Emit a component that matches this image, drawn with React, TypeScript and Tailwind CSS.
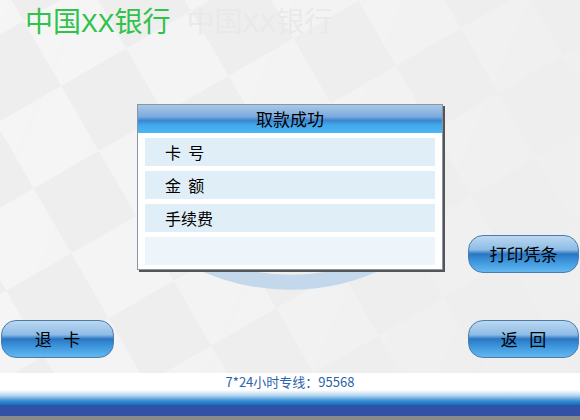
const cjk = "font-['Noto_Sans_CJK_SC',sans-serif]";

function AtmButton({ label }: { label: string }) {
  return (
    <div
      className={`h-[38px] rounded-[15px] border border-[#4a7cb0] bg-[linear-gradient(180deg,#bcd8f0_0%,#8dbce6_38%,#2a76c2_50%,#3f98de_72%,#64b8f0_100%)] flex items-center justify-center text-[17px] text-black whitespace-pre ${cjk}`}
    >
      {label}
    </div>
  );
}

export default function App() {
  const rows = ["卡  号", "金  额", "手续费", ""];

  return (
    <div className="relative w-[580px] h-[420px] overflow-hidden bg-[#eeeeee] flex flex-col">
      {/* background checker + ring */}
      <svg className="absolute inset-0" width="580" height="420">
        <defs>
          <pattern
            id="chk"
            width="150"
            height="150"
            patternUnits="userSpaceOnUse"
            patternTransform="rotate(-30) translate(10 30)"
          >
            <rect x="0" y="0" width="75" height="75" fill="#f6f6f6" />
            <rect x="75" y="75" width="75" height="75" fill="#f6f6f6" />
          </pattern>
          <linearGradient id="fade" x1="0" y1="0" x2="1" y2="0.3">
            <stop offset="0" stopColor="#fff" stopOpacity="0.9" />
            <stop offset="0.6" stopColor="#fff" stopOpacity="0.6" />
            <stop offset="1" stopColor="#fff" stopOpacity="0.15" />
          </linearGradient>
          <mask id="m">
            <rect width="580" height="420" fill="url(#fade)" />
          </mask>
        </defs>
        <rect width="580" height="420" fill="url(#chk)" mask="url(#m)" />
        <path
          d="M 192 258 A 210 210 0 0 0 388 258"
          fill="none"
          stroke="#c3d8eb"
          strokeWidth="15"
        />
      </svg>

      {/* header */}
      <div className="relative h-[104px] pl-[25px] pt-[8px] flex items-start">
        <span className="text-[28px] leading-[34px] text-[#30c24a] font-['Liberation_Mono','Noto_Sans_CJK_SC',monospace]">
          中国XX银行
        </span>
        <span className="ml-[16px] text-[28px] leading-[34px] text-[#e9e9e9] font-['Liberation_Mono','Noto_Sans_CJK_SC',monospace]">
          中国XX银行
        </span>
      </div>

      {/* main row */}
      <div className="relative flex items-start h-[254px]">
        <div className="w-[113px] ml-[1px] pt-[216px]">
          <AtmButton label="退   卡" />
        </div>

        <div className="ml-[23px] w-[306px] h-[166px] bg-white border border-[#8896a8] shadow-[2px_2px_0_#555] flex flex-col">
          <div
            className={`h-[28px] bg-[linear-gradient(180deg,#a9c8e6_0%,#7aaade_42%,#3c86ce_55%,#42a8ec_72%,#4cb8f4_100%)] flex items-center justify-center text-[17px] text-black ${cjk}`}
          >
            取款成功
          </div>
          <div className="flex flex-col gap-[5px] px-[7px] pt-[5px]">
            {rows.map((r, i) => (
              <div
                key={i}
                className={`h-[28px] flex items-center pl-[20px] text-[16px] text-black whitespace-pre ${cjk} ${
                  i === 3 ? "bg-[#eef5fa]" : "bg-[#e0eef7]"
                }`}
              >
                {r}
              </div>
            ))}
          </div>
        </div>

        <div className="ml-[25px] w-[111px] pt-[131px] flex flex-col gap-[47px]">
          <AtmButton label="打印凭条" />
          <AtmButton label="返   回" />
        </div>
      </div>

      {/* footer */}
      <div className="relative mt-[15px] h-[17px] bg-white flex items-center justify-center">
        <span className={`text-[13px] text-[#2a62ad] ${cjk}`}>
          7*24小时专线：95568
        </span>
      </div>
      <div className="relative h-[15px] bg-[linear-gradient(180deg,#ffffff_0%,#b8d8f0_35%,#3e92d6_70%,#0f6cbe_100%)]" />
      <div className="relative h-[11px] bg-[#3150a6]" />
      <div className="relative h-[4px] bg-[#8a8a8a]" />
    </div>
  );
}
